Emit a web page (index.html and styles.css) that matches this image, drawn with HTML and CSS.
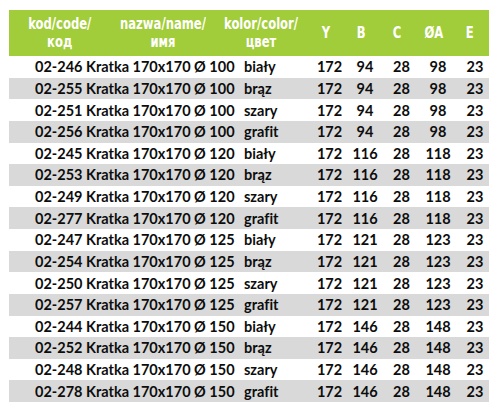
FILE: index.html
```html
<!DOCTYPE html>
<html>
<head>
<meta charset="utf-8">
<link rel="stylesheet" href="styles.css">
</head>
<body>
<div class="table">
  <div class="head">
    <div class="hc"><span class="ht"><span class="hl">kod/code/</span><span class="hl">код</span></span></div>
    <div class="hc"><span class="ht"><span class="hl">nazwa/name/</span><span class="hl">имя</span></span></div>
    <div class="hc"><span class="ht"><span class="hl">kolor/color/</span><span class="hl">цвет</span></span></div>
    <div class="hc"><span class="ht">Y</span></div>
    <div class="hc"><span class="ht">B</span></div>
    <div class="hc"><span class="ht">C</span></div>
    <div class="hc"><span class="ht">ØA</span></div>
    <div class="hc"><span class="ht">E</span></div>
  </div>
  <div class="row"><span class="code">02-246</span><span class="name">Kratka 170x170 Ø 100</span><span class="col">biały</span><span class="n">172</span><span class="n">94</span><span class="n">28</span><span class="n">98</span><span class="n last">23</span></div>
  <div class="row alt"><span class="code">02-255</span><span class="name">Kratka 170x170 Ø 100</span><span class="col">brąz</span><span class="n">172</span><span class="n">94</span><span class="n">28</span><span class="n">98</span><span class="n last">23</span></div>
  <div class="row"><span class="code">02-251</span><span class="name">Kratka 170x170 Ø 100</span><span class="col">szary</span><span class="n">172</span><span class="n">94</span><span class="n">28</span><span class="n">98</span><span class="n last">23</span></div>
  <div class="row alt"><span class="code">02-256</span><span class="name">Kratka 170x170 Ø 100</span><span class="col">grafit</span><span class="n">172</span><span class="n">94</span><span class="n">28</span><span class="n">98</span><span class="n last">23</span></div>
  <div class="row"><span class="code">02-245</span><span class="name">Kratka 170x170 Ø 120</span><span class="col">biały</span><span class="n">172</span><span class="n">116</span><span class="n">28</span><span class="n">118</span><span class="n last">23</span></div>
  <div class="row alt"><span class="code">02-253</span><span class="name">Kratka 170x170 Ø 120</span><span class="col">brąz</span><span class="n">172</span><span class="n">116</span><span class="n">28</span><span class="n">118</span><span class="n last">23</span></div>
  <div class="row"><span class="code">02-249</span><span class="name">Kratka 170x170 Ø 120</span><span class="col">szary</span><span class="n">172</span><span class="n">116</span><span class="n">28</span><span class="n">118</span><span class="n last">23</span></div>
  <div class="row alt"><span class="code">02-277</span><span class="name">Kratka 170x170 Ø 120</span><span class="col">grafit</span><span class="n">172</span><span class="n">116</span><span class="n">28</span><span class="n">118</span><span class="n last">23</span></div>
  <div class="row"><span class="code">02-247</span><span class="name">Kratka 170x170 Ø 125</span><span class="col">biały</span><span class="n">172</span><span class="n">121</span><span class="n">28</span><span class="n">123</span><span class="n last">23</span></div>
  <div class="row alt"><span class="code">02-254</span><span class="name">Kratka 170x170 Ø 125</span><span class="col">brąz</span><span class="n">172</span><span class="n">121</span><span class="n">28</span><span class="n">123</span><span class="n last">23</span></div>
  <div class="row"><span class="code">02-250</span><span class="name">Kratka 170x170 Ø 125</span><span class="col">szary</span><span class="n">172</span><span class="n">121</span><span class="n">28</span><span class="n">123</span><span class="n last">23</span></div>
  <div class="row alt"><span class="code">02-257</span><span class="name">Kratka 170x170 Ø 125</span><span class="col">grafit</span><span class="n">172</span><span class="n">121</span><span class="n">28</span><span class="n">123</span><span class="n last">23</span></div>
  <div class="row"><span class="code">02-244</span><span class="name">Kratka 170x170 Ø 150</span><span class="col">biały</span><span class="n">172</span><span class="n">146</span><span class="n">28</span><span class="n">148</span><span class="n last">23</span></div>
  <div class="row alt"><span class="code">02-252</span><span class="name">Kratka 170x170 Ø 150</span><span class="col">brąz</span><span class="n">172</span><span class="n">146</span><span class="n">28</span><span class="n">148</span><span class="n last">23</span></div>
  <div class="row"><span class="code">02-248</span><span class="name">Kratka 170x170 Ø 150</span><span class="col">szary</span><span class="n">172</span><span class="n">146</span><span class="n">28</span><span class="n">148</span><span class="n last">23</span></div>
  <div class="row alt"><span class="code">02-278</span><span class="name">Kratka 170x170 Ø 150</span><span class="col">grafit</span><span class="n">172</span><span class="n">146</span><span class="n">28</span><span class="n">148</span><span class="n last">23</span></div>
</div>
</body>
</html>
```

FILE: styles.css
```css
html, body {
  margin: 0;
  padding: 0;
  background: #ffffff;
}
body {
  padding: 10px 0 0 9px;
  font-family: Lato, "Open Sans", sans-serif;
  font-weight: 700;
  color: #0d0d0d;
  font-variant-ligatures: none;
}
.table {
  width: 480px;
}
.head {
  display: grid;
  grid-template-columns: 101px 106px 90px 40px 30px 42px 32px 39px;
  height: 46px;
  background: #a2cd3a;
  color: #ffffff;
}
.hc {
  display: flex;
  align-items: center;
  justify-content: center;
  padding-top: 1px;
}
.ht {
  display: flex;
  flex-direction: column;
  align-items: center;
  white-space: nowrap;
  font-family: "DejaVu Sans Condensed", "DejaVu Sans", sans-serif;
  font-stretch: condensed;
  font-size: 15px;
  line-height: 17.5px;
  transform: scaleX(0.86);
}
.hl {
  display: block;
  height: 17.5px;
}
.row {
  display: grid;
  grid-template-columns: 76px 155px 70px 39px 32px 41px 32px 35px;
  height: 21.625px;
  align-items: center;
  font-size: 14.5px;
  white-space: nowrap;
}
.row.alt {
  background: #d9d9d9;
}
.code {
  padding-left: 26px;
}
.name {
  padding-left: 1px;
}
.col {
  padding-left: 4px;
}
.n {
  text-align: center;
}
.n.last {
  padding-left: 7px;
}
```
